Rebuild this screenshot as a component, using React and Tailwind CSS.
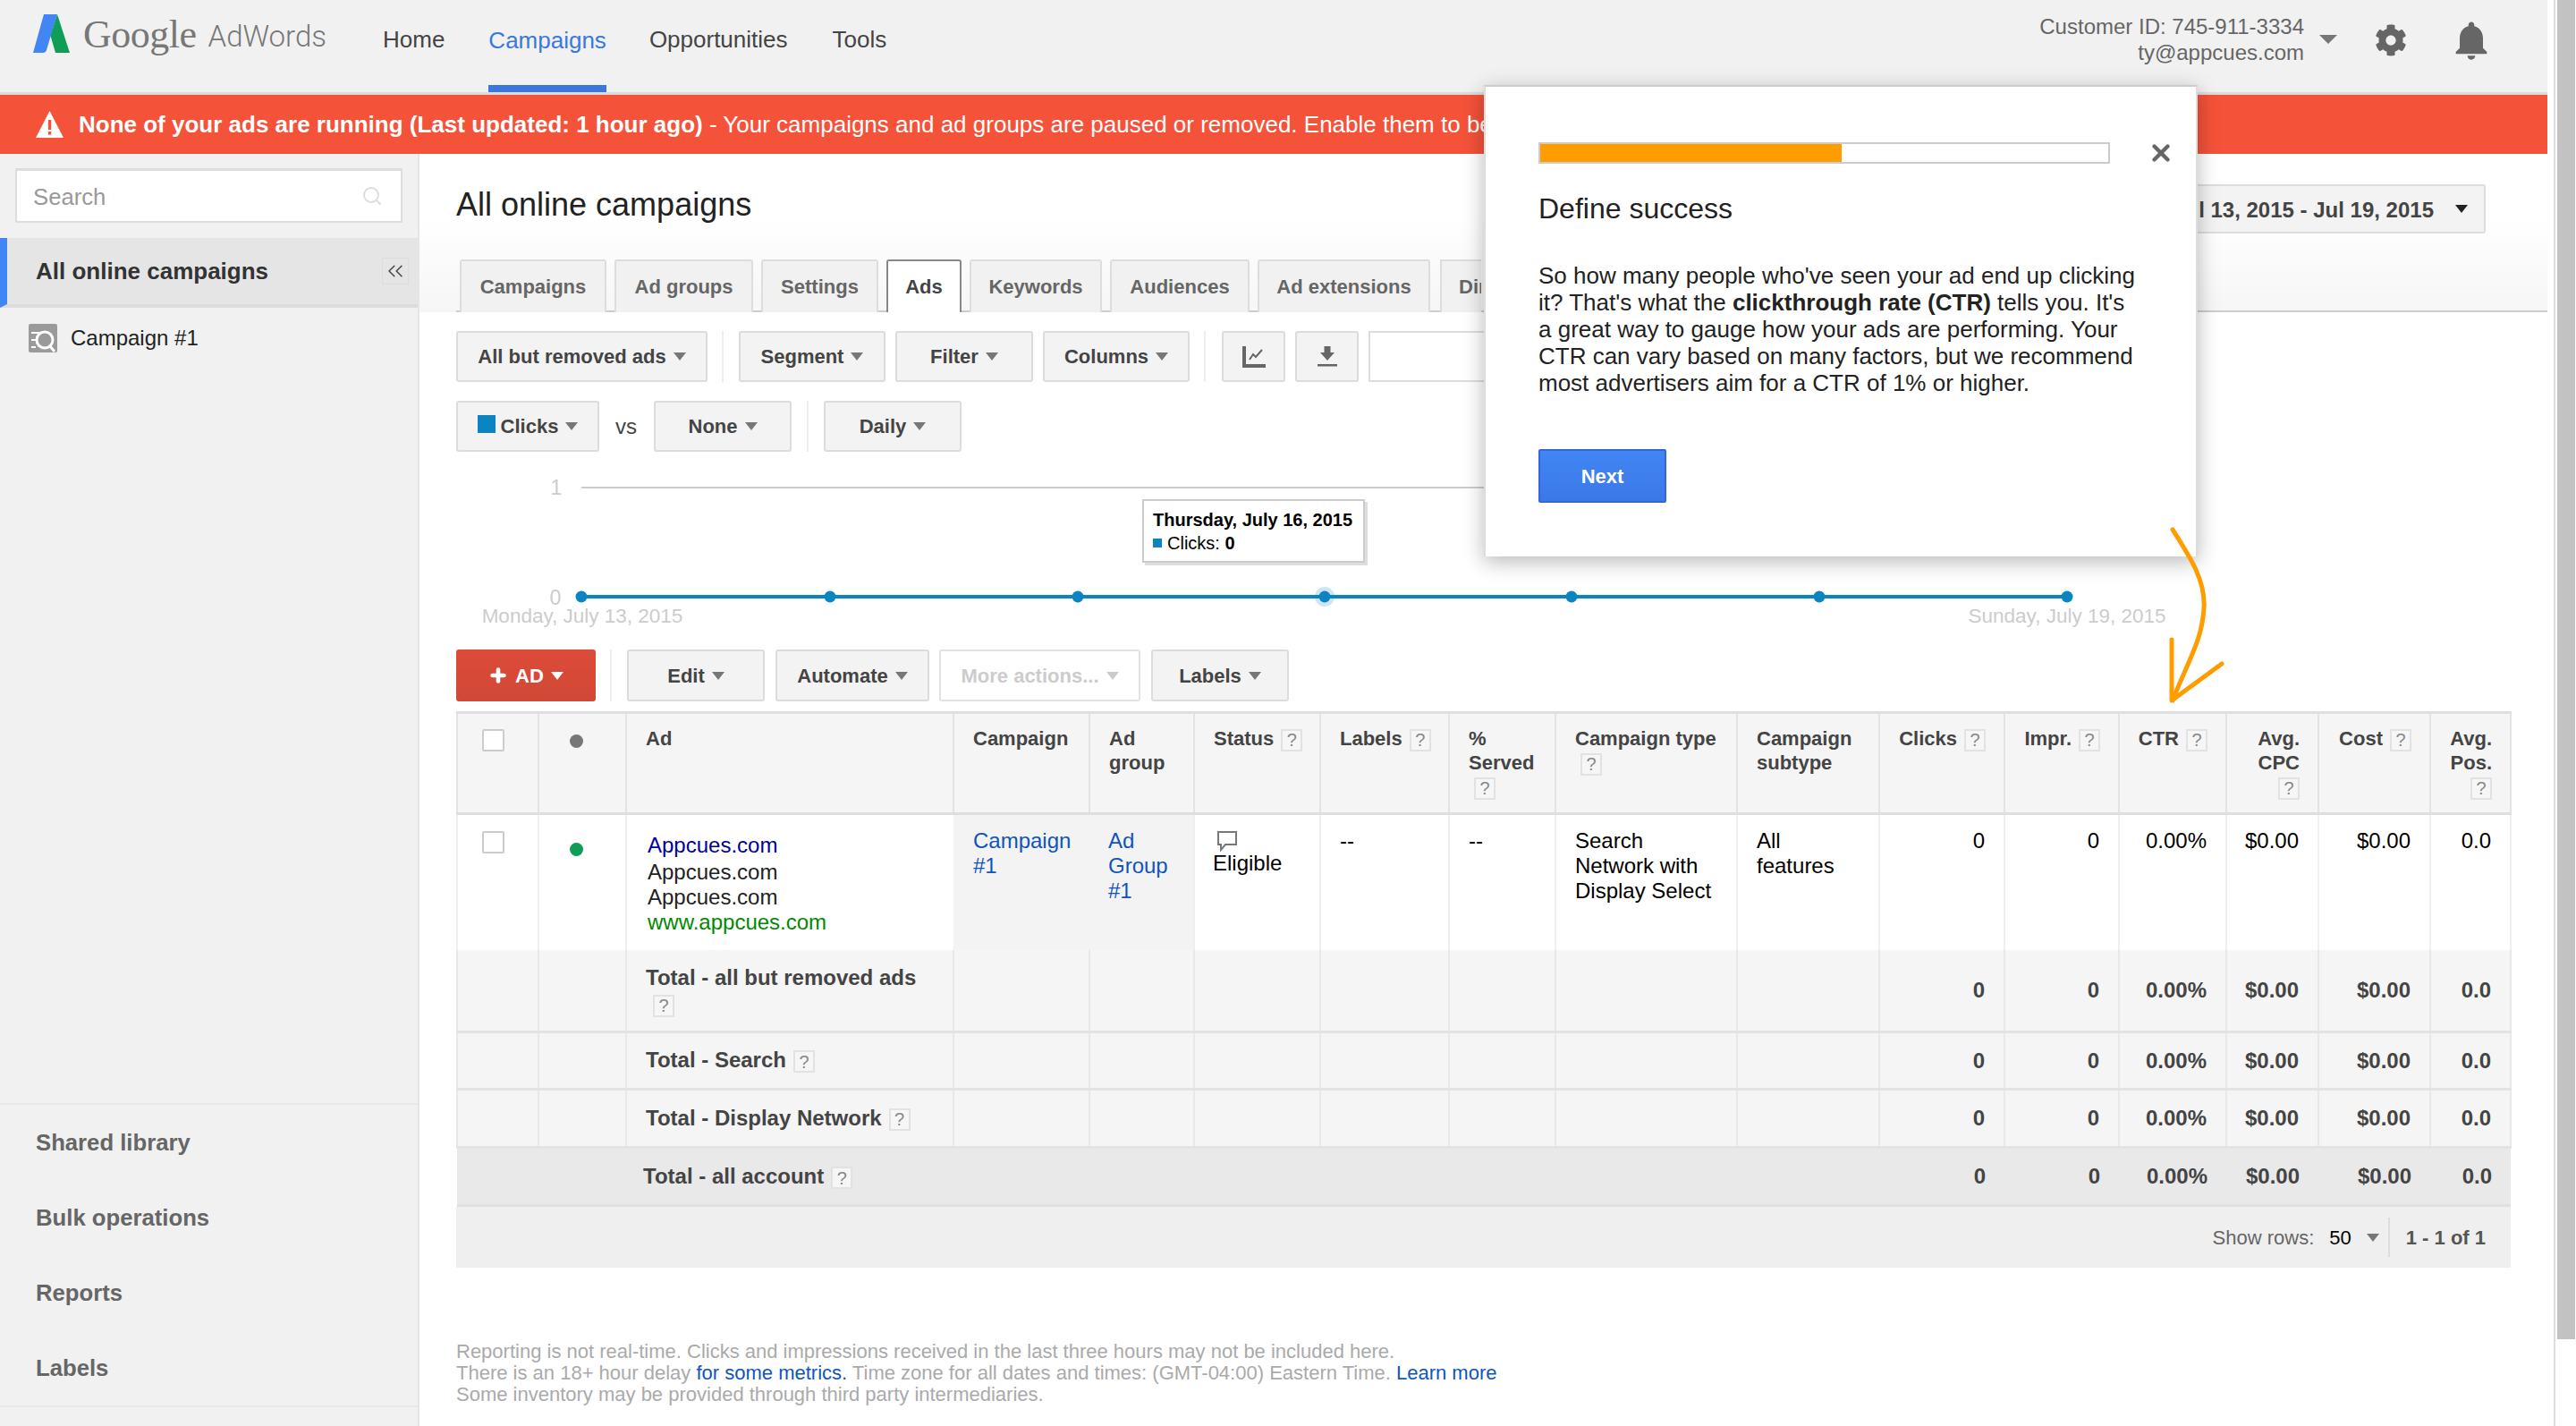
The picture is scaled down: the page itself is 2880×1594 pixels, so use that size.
import { ChevronsLeft, Search, X, Plus } from 'lucide-react';
import { FaCog } from 'react-icons/fa';
import { MdNotifications } from 'react-icons/md';

const TEXT = 'text-[#444]';

function Caret({ color = 'border-t-[#777]', className = '' }) {
  return <span className={`inline-block w-0 h-0 border-x-[7px] border-t-[9px] border-x-transparent ${color} ${className}`} />;
}

function Btn({ label, className = '', children }) {
  return (
    <div className={`flex items-center justify-center gap-[8px] h-full rounded-[3px] border-2 border-[#dcdcdc] bg-[#f3f3f3] text-[22px] font-bold ${TEXT} ${className}`}>
      {children}
      {label}
      <Caret />
    </div>
  );
}

function Help({ className = 'ml-[8px]' }) {
  return (
    <span className={`inline-flex items-center justify-center w-[24px] h-[25px] align-middle border-2 border-[#e2e2e2] bg-[#f6f6f6] text-[20px] font-normal text-[#888] ${className}`}>?</span>
  );
}

function Logo() {
  return (
    <svg width="41" height="43" viewBox="0 0 41 43">
      <path d="M12 0 L27 0 L15 40 Q14 43 11 43 L0 43 Z" fill="#4285f4" />
      <path d="M27 0 L41 43 L25 43 L19.5 24 Z" fill="#0f9d58" />
    </svg>
  );
}

const tabs = [
  ['Campaigns', 'w-[164px]'],
  ['Ad groups', 'w-[155px]'],
  ['Settings', 'w-[131px]'],
  ['Ads', 'w-[84px]'],
  ['Keywords', 'w-[148px]'],
  ['Audiences', 'w-[156px]'],
  ['Ad extensions', 'w-[193px]'],
];

function Tabs() {
  return (
    <div className="flex gap-[9px] h-[59px] mt-[29px] pl-[4px] border-b-2 border-[#ccc]">
      {tabs.map(([name, w]) => {
        const active = name === 'Ads';
        return (
          <div
            key={name}
            className={`${w} h-[59px] flex items-center justify-center rounded-t-[3px] border-2 border-b-0 text-[22px] font-bold ${active ? 'bg-white border-[#888] text-[#444] relative' : 'bg-[#f1f1f1] border-[#ddd] text-[#666]'}`}
          >
            {name}
          </div>
        );
      })}
      {/* runs under the popover */}
      <div className="w-[46px] h-[59px] ml-[2px] overflow-hidden whitespace-nowrap flex items-center pl-[19px] border-2 border-b-0 border-r-0 border-[#ddd] bg-[#f1f1f1] text-[22px] font-bold text-[#666]">
        Dimensions
      </div>
    </div>
  );
}

function Chart() {
  const points = [650, 928, 1205, 1481, 1757, 2034, 2311];
  return (
    <div className="relative h-[221px]">
      <svg className="absolute inset-0" width="2338" height="221" viewBox="510 505 2338 221">
        <line x1="650" y1="545" x2="1680" y2="545" stroke="#ccc" strokeWidth="2" />
        <text x="622" y="553" textAnchor="middle" fontSize="23" fill="#ccc">1</text>
        <text x="621" y="676" textAnchor="middle" fontSize="23" fill="#ccc">0</text>
        <line x1="650" y1="667" x2="2311" y2="667" stroke="#0b84c2" strokeWidth="4" />
        <circle cx="1481" cy="667" r="11" fill="#0b84c2" opacity="0.2" />
        {points.map((x) => (
          <circle key={x} cx={x} cy="667" r="6.5" fill="#0b84c2" />
        ))}
        <text x="651" y="696" textAnchor="middle" fontSize="22.5" fill="#ccc">Monday, July 13, 2015</text>
        <text x="2311" y="696" textAnchor="middle" fontSize="22.5" fill="#ccc">Sunday, July 19, 2015</text>
      </svg>
      <div className="absolute left-[767px] top-[53px] w-[249px] h-[71px] bg-white border-2 border-[#ccc] shadow-[3px_3px_0_#ddd] pl-[10px] pt-[8px] text-[20px] leading-[26px] text-black">
        <div className="font-bold">Thursday, July 16, 2015</div>
        <div className="flex items-center gap-[6px]">
          <span className="w-[10px] h-[10px] bg-[#0b84c2]" />
          <span>Clicks: <b>0</b></span>
        </div>
      </div>
    </div>
  );
}

const cols = ['w-[91px]', 'w-[98px]', 'w-[366px]', 'w-[152px]', 'w-[117px]', 'w-[141px]', 'w-[144px]', 'w-[119px]', 'w-[203px]', 'w-[159px]', 'w-[140px]', 'w-[128px]', 'w-[120px]', 'w-[103px]', 'w-[125px]', 'w-[90px]'];
const th = 'border-x-2 border-[#e3e3e3] align-top text-left font-bold text-[22px] leading-[27px] text-[#444] pl-[21px] pr-[2px] pt-[14px]';
const thNum = 'border-x-2 border-[#e3e3e3] align-top text-right font-bold text-[22px] leading-[27px] text-[#444] pl-[8px] pr-[20px] pt-[14px]';
const td = 'border-x-2 border-[#efefef] align-top text-[24px] leading-[28px] text-black pl-[21px] pr-[2px] pt-[15px]';
const tdNum = 'border-x-2 border-[#efefef] align-top text-right text-[24px] leading-[28px] text-black pr-[21px] pt-[15px]';

function TotalRow({ label, height, bg = 'bg-[#f5f5f5]', wrap, pl = 'pl-[21px]' }) {
  const line = 'border-x-2 border-[#e8e8e8]';
  const num = `${line} text-right font-bold text-[24px] text-[#444] pr-[21px] align-middle`;
  return (
    <tr className={`${height} ${bg} border-b-[3px] border-[#e3e3e3]`}>
      <td className={line} />
      <td className={line} />
      <td className={`${line} ${pl} pr-[8px] align-middle text-[24px] leading-[30px] font-bold text-[#444] ${wrap ? 'pt-[2px]' : 'pb-[1px]'}`}>
        {label}{wrap ? <br /> : null}<Help />
      </td>
      <td className={line} />
      <td className={line} />
      <td className={line} />
      <td className={line} />
      <td className={line} />
      <td className={line} />
      <td className={line} />
      <td className={num}>0</td>
      <td className={num}>0</td>
      <td className={num}>0.00%</td>
      <td className={num}>$0.00</td>
      <td className={num}>$0.00</td>
      <td className={num}>0.0</td>
    </tr>
  );
}

function AdsTable() {
  return (
    <table className="w-[2297px] table-fixed border-collapse border-t-[3px] border-[#dfdfdf]">
      <colgroup>
        {cols.map((c, i) => <col key={i} className={c} />)}
      </colgroup>
      <thead>
        <tr className="h-[113px] bg-[#f5f5f5] border-b-[3px] border-[#dedede]">
          <th className="border-x-2 border-[#e3e3e3] align-top pt-[17px]">
            <span className="block w-[25px] h-[25px] ml-[27px] bg-white border-2 border-[#ccc] rounded-[2px]" />
          </th>
          <th className="border-x-2 border-[#e3e3e3] align-top pt-[23px]">
            <span className="block w-[15px] h-[15px] ml-[34px] rounded-full bg-[#777]" />
          </th>
          <th className={th}>Ad</th>
          <th className={th}>Campaign</th>
          <th className={th}>Ad<br />group</th>
          <th className={th}>Status<Help /></th>
          <th className={th}>Labels<Help /></th>
          <th className={th}>%<br />Served<br /><Help className="ml-[6px]" /></th>
          <th className={th}>Campaign type<br /><Help className="ml-[6px]" /></th>
          <th className={th}>Campaign<br />subtype</th>
          <th className={thNum}>Clicks<Help /></th>
          <th className={thNum}>Impr.<Help /></th>
          <th className={thNum}>CTR<Help /></th>
          <th className={thNum}>Avg.<br />CPC<br /><Help className="ml-0" /></th>
          <th className={thNum}>Cost<Help /></th>
          <th className={thNum}>Avg.<br />Pos.<br /><Help className="ml-0" /></th>
        </tr>
      </thead>
      <tbody>
        <tr className="h-[152px] bg-white">
          <td className="border-x-2 border-[#efefef] align-top pt-[18px]">
            <span className="block w-[25px] h-[25px] ml-[27px] bg-white border-2 border-[#ccc] rounded-[2px]" />
          </td>
          <td className="border-x-2 border-[#efefef] align-top pt-[31px]">
            <span className="block w-[15px] h-[15px] ml-[34px] rounded-full bg-[#0f9d58]" />
          </td>
          <td className="border-l-2 border-[#efefef] align-top text-[24px] leading-[28px] text-[#222] pl-[23px] pt-[20px]">
            <div className="text-[#00009c] mb-[2px]">Appcues.com</div>
            <div>Appcues.com</div>
            <div>Appcues.com</div>
            <div className="text-[#008a00]">www.appcues.com</div>
          </td>
          <td className="bg-[#f3f3f3] align-top text-[24px] leading-[28px] text-[#1155bb] pl-[22px] pr-[8px] pt-[15px]">Campaign #1</td>
          <td className="bg-[#f3f3f3] align-top text-[24px] leading-[28px] text-[#1155bb] pl-[21px] pr-[8px] pt-[15px]">Ad Group #1</td>
          <td className="border-x-2 border-[#efefef] align-top text-[24px] leading-[28px] text-black pl-[20px] pt-[17px]">
            <svg className="block ml-[4px]" width="24" height="24" viewBox="0 0 24 24" fill="none" stroke="#777" strokeWidth="2">
              <path d="M2 2 H22 V16 H10 L5 22 V16 H2 Z" />
            </svg>
            <div className="-mt-[1px]">Eligible</div>
          </td>
          <td className={td}>--</td>
          <td className={td}>--</td>
          <td className={td}>Search<br />Network with<br />Display Select</td>
          <td className={td}>All<br />features</td>
          <td className={tdNum}>0</td>
          <td className={tdNum}>0</td>
          <td className={tdNum}>0.00%</td>
          <td className={tdNum}>$0.00</td>
          <td className={tdNum}>$0.00</td>
          <td className={tdNum}>0.0</td>
        </tr>
        <TotalRow label="Total - all but removed ads" height="h-[92px]" wrap />
        <TotalRow label="Total - Search" height="h-[64px]" />
        <TotalRow label="Total - Display Network" height="h-[65px]" />
        <tr className="h-[65px] bg-[#e9e9e9] border-b-[3px] border-[#e0e0e0]">
          <td colSpan={2} />
          <td colSpan={8} className="pl-[19px] text-[24px] font-bold text-[#444]">Total - all account<Help /></td>
          {['0', '0', '0.00%', '$0.00', '$0.00', '0.0'].map((v, i) => (
            <td key={i} className="text-right font-bold text-[24px] text-[#444] pr-[21px]">{v}</td>
          ))}
        </tr>
      </tbody>
    </table>
  );
}

function Sidebar() {
  return (
    <div className="w-[469px] shrink-0 flex flex-col bg-[#f1f1f1] border-r-2 border-[#e5e5e5]">
      <div className="flex items-center justify-between mx-[17px] mt-[16px] h-[61px] bg-white border-2 border-[#ddd] border-t-[3px] pl-[18px] pr-[20px]">
        <span className="text-[25.7px] text-[#999] mt-[2px]">Search</span>
        <Search size={24} strokeWidth={2} className="text-[#ddd]" />
      </div>
      <div className="flex items-center justify-between mt-[17px] h-[78px] bg-[#e5e5e5] border-l-[8px] border-[#4285f4] border-b-[4px] border-b-[#dcdcdc] pl-[32px] pr-[10px]">
        <span className="text-[26px] font-bold text-[#333]">All online campaigns</span>
        <span className="flex items-center justify-center w-[30px] h-[30px] border border-[#ddd]">
          <ChevronsLeft size={28} strokeWidth={1.25} className="text-[#444]" />
        </span>
      </div>
      <div className="flex items-center gap-[15px] mt-[16px] pl-[32px]">
        <svg width="32" height="32" viewBox="0 0 32 32">
          <rect width="32" height="32" rx="2" fill="#9a9a9a" />
          <circle cx="18" cy="18" r="9" fill="none" stroke="#fff" strokeWidth="3" />
          <path d="M23 24 L29 31" stroke="#fff" strokeWidth="3" />
          <path d="M3 10 H12 M3 18 H8 M3 26 H8" stroke="#fff" strokeWidth="2" />
        </svg>
        <span className="text-[24px] text-[#222]">Campaign #1</span>
      </div>
      <div className="mt-auto border-t-2 border-[#e8e8e8] mb-[21px] border-b-2">
        {['Shared library', 'Bulk operations', 'Reports', 'Labels'].map((item) => (
          <div key={item} className="h-[84px] flex items-center pl-[40px] text-[25.7px] font-bold text-[#666]">{item}</div>
        ))}
      </div>
    </div>
  );
}

function Popover() {
  return (
    <div className="absolute left-[1659px] top-[95px] w-[798px] h-[527px] bg-white border-2 border-[#ccc] border-b-0 border-x-[#ddd] shadow-[0_6px_22px_rgba(0,0,0,0.28)] pl-[59px] pt-[59px]">
      <div className="flex items-center">
        <div className="w-[639px] h-[24px] border-2 border-[#ccc] bg-white">
          <div className="w-[337px] h-full bg-[#ff9c00]" />
        </div>
        <X size={30} strokeWidth={3.5} className="text-[#666] ml-[42px]" />
      </div>
      <h2 className="mt-[27px] text-[32px] leading-[40px] text-[#222]">Define success</h2>
      <p className="mt-[40px] w-[672px] text-[26px] leading-[30px] text-[#222]">
        So how many people who've seen your ad end up clicking it? That's what the <b>clickthrough rate (CTR)</b> tells you. It's a great way to gauge how your ads are performing. Your CTR can vary based on many factors, but we recommend most advertisers aim for a CTR of 1% or higher.
      </p>
      <div className="mt-[59px] w-[143px] h-[60px] flex items-center justify-center rounded-[2px] border-2 border-[#3367d6] bg-gradient-to-b from-[#4285f4] to-[#3b78e7] text-[22px] font-bold text-white">Next</div>
    </div>
  );
}

export default function App() {
  return (
    <div className="relative flex w-[2880px] h-[1594px] overflow-hidden bg-white font-['Liberation_Sans',Arial,sans-serif]">
      <div className="w-[2848px] shrink-0 flex flex-col">
        {/* Top bar */}
        <div className="h-[106px] shrink-0 flex bg-[#f1f1f1] border-b-[3px] border-[#dcdcdc]">
          <div className="flex items-center pl-[37px] w-[428px] shrink-0 h-[75px]">
            <Logo />
            <span className="ml-[15px] mt-[3px] font-['Liberation_Serif',serif] text-[44px] text-[#777] tracking-[-0.5px]">Google</span>
            <span className="ml-[13px] font-['Roboto',sans-serif] font-light text-[33px] text-[#777] mt-[6px]">AdWords</span>
          </div>
          <div className="flex text-[26px] text-[#444] h-full">
            <div className="pt-[25px]">Home</div>
            <div className="ml-[49px] pt-[26px] h-full border-b-[8px] border-[#3a78e0] text-[#3a78e0]">Campaigns</div>
            <div className="ml-[48px] pt-[25px]">Opportunities</div>
            <div className="ml-[50px] pt-[25px]">Tools</div>
          </div>
          <div className="ml-auto flex items-start pr-[59px]">
            <div className="text-right text-[24px] leading-[29px] text-[#666] pt-[15px]">
              <div>Customer ID: 745-911-3334</div>
              <div>ty@appcues.com</div>
            </div>
            <span className="inline-block w-0 h-0 border-x-[10px] border-t-[10px] border-x-transparent border-t-[#777] ml-[17px] mt-[39px]" />
            <FaCog size={36} className="text-[#666] ml-[42px] mt-[27px]" />
            <MdNotifications size={52} className="text-[#666] ml-[46px] mt-[19px]" />
          </div>
        </div>
        {/* Alert */}
        <div className="h-[66px] shrink-0 flex items-center bg-[#f45239] pl-[39px] text-[26px] text-white">
          <svg className="shrink-0 mr-[16px]" width="33" height="32" viewBox="0 0 33 32">
            <path d="M16.5 1 L32 31 H1 Z" fill="#fff" />
            <rect x="14.8" y="11" width="3.4" height="11" fill="#f45239" />
            <rect x="14.8" y="24" width="3.4" height="3.6" fill="#f45239" />
          </svg>
          <div className="w-[1571px] overflow-hidden whitespace-nowrap">
            <b>None of your ads are running (Last updated: 1 hour ago)</b> - Your campaigns and ad groups are paused or removed. Enable them to begin running your ads.
          </div>
        </div>
        <div className="flex-1 flex min-h-0">
          <Sidebar />
          <div className="flex-1 min-w-0 flex flex-col">
            <div className="pt-[34px] bg-gradient-to-b from-white from-40% to-[#f6f6f6]">
              <div className="flex items-center justify-between h-[55px] pl-[41px] pr-[69px]">
                <h1 className="text-[36px] text-[#222] mb-[10px]">All online campaigns</h1>
                <div className="flex items-center h-full w-[322px] overflow-hidden whitespace-nowrap justify-end gap-[24px] pr-[18px] rounded-r-[3px] border-2 border-l-0 border-[#ddd] bg-[#f3f3f3] text-[24px] font-bold text-[#444]">
                  <span className="shrink-0 mt-[2px]">Jul 13, 2015 - Jul 19, 2015</span>
                  <Caret color="border-t-[#222]" className="shrink-0" />
                </div>
              </div>
              <div className="pl-[41px]">
                <Tabs />
              </div>
            </div>
            <div className="pl-[41px] pr-[41px]">
              <div className="flex h-[57px] mt-[21px] gap-[11px]">
                <Btn label="All but removed ads" className="w-[281px]" />
                <div className="w-[2px] bg-[#eee] ml-[5px] mr-[6px]" />
                <Btn label="Segment" className="w-[164px]" />
                <Btn label="Filter" className="w-[154px]" />
                <Btn label="Columns" className="w-[164px]" />
                <div className="w-[2px] bg-[#eee] ml-[5px] mr-[7px]" />
                <div className="w-[71px] flex items-center justify-center rounded-[3px] border-2 border-[#dcdcdc] bg-[#f3f3f3]">
                  <svg width="26" height="24" viewBox="0 0 26 24" fill="none" stroke="#666">
                    <path d="M2 0 V22 H26" strokeWidth="4" />
                    <path d="M8 15 L12 9 L15 12 L22 4" strokeWidth="2" />
                  </svg>
                </div>
                <div className="w-[71px] flex items-center justify-center rounded-[3px] border-2 border-[#dcdcdc] bg-[#f3f3f3]">
                  <svg width="24" height="24" viewBox="0 0 24 24" fill="#666">
                    <path d="M8.5 0 H15.5 V7 H20 L12 16 L4 7 H8.5 Z" />
                    <rect x="1" y="20" width="22" height="2.5" />
                  </svg>
                </div>
                <div className="w-[160px] border-2 border-[#ddd] bg-white" />
              </div>
              <div className="flex items-center h-[57px] mt-[21px]">
                <Btn label="Clicks" className="w-[160px]">
                  <span className="w-[20px] h-[20px] bg-[#0b84c2] -mt-[6px] -mr-[2px]" />
                </Btn>
                <span className="ml-[18px] w-[23px] text-[24px] text-[#444]">vs</span>
                <Btn label="None" className="w-[154px] ml-[20px]" />
                <div className="w-[2px] h-full bg-[#eee] ml-[17px]" />
                <Btn label="Daily" className="w-[154px] ml-[17px]" />
              </div>
              <Chart />
              <div className="flex h-[58px]">
                <div className="w-[156px] flex items-center justify-center gap-[8px] rounded-[3px] bg-gradient-to-b from-[#dd4b39] to-[#d14836] text-[22px] font-bold text-white">
                  <Plus size={22} strokeWidth={5} />
                  AD
                  <Caret color="border-t-white" />
                </div>
                <div className="w-[2px] bg-[#eee] ml-[16px]" />
                <Btn label="Edit" className="w-[154px] ml-[17px]" />
                <Btn label="Automate" className="w-[172px] ml-[12px]" />
                <div className="w-[225px] ml-[11px] flex items-center justify-center gap-[8px] rounded-[3px] border-2 border-[#e2e2e2] bg-white text-[22px] font-bold text-[#ccc]">
                  More actions...
                  <Caret color="border-t-[#ccc]" />
                </div>
                <Btn label="Labels" className="w-[154px] ml-[12px]" />
              </div>
              <div className="mt-[11px]">
                <AdsTable />
                <div className="w-[2297px] h-[68px] bg-[#efefef] flex items-center justify-end pr-[28px] text-[22px] text-[#666]">
                  Show rows:
                  <span className="ml-[17px] text-black">50</span>
                  <Caret className="ml-[17px]" />
                  <span className="w-[2px] h-[44px] bg-[#ddd] ml-[10px] mr-[18px]" />
                  <span className="text-[#555] font-bold">1 - 1 of 1</span>
                </div>
              </div>
              <div className="mt-[82px] text-[22px] leading-[24px] text-[#aaa]">
                <div>Reporting is not real-time. Clicks and impressions received in the last three hours may not be included here.</div>
                <div>There is an 18+ hour delay <span className="text-[#1155bb]">for some metrics.</span> Time zone for all dates and times: (GMT-04:00) Eastern Time. <span className="text-[#1155bb]">Learn more</span></div>
                <div>Some inventory may be provided through third party intermediaries.</div>
              </div>
            </div>
          </div>
        </div>
      </div>
      {/* Scrollbar */}
      <div className="flex-1 pl-[7px]">
        <div className="h-full border-l-2 border-[#ddd] pl-[2px]">
          <div className="w-[20px] h-[1497px] bg-[#c2c2c2]" />
        </div>
      </div>
      <Popover />
      {/* Callout arrow */}
      <svg className="absolute left-[2410px] top-[580px]" width="90" height="220" viewBox="2410 580 90 220" fill="none" stroke="#ff9c00" strokeWidth="5" strokeLinecap="round">
        <path d="M2429 592 C2450 625 2466 650 2464 680 C2462 715 2448 735 2429 783" />
        <path d="M2428 715 L2428 783 L2484 742" strokeWidth="5" strokeLinejoin="round" />
      </svg>
    </div>
  );
}
